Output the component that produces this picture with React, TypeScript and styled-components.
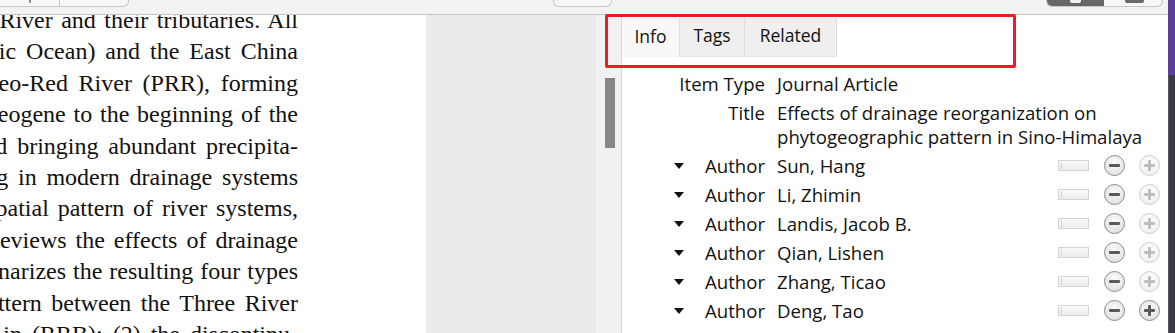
import React from "react";
import styled, { createGlobalStyle } from "styled-components";

const GlobalStyle = createGlobalStyle`
  html, body {
    margin: 0;
    padding: 0;
    width: 1175px;
    height: 333px;
    overflow: hidden;
    background: #fff;
  }
`;

const uiFont = `"Open Sans", "Noto Sans", sans-serif`;

const Shell = styled.div`
  display: flex;
  width: 1175px;
  height: 333px;
`;

const Content = styled.div`
  flex: 1;
  display: flex;
  flex-direction: column;
  min-width: 0;
`;

const Toolbar = styled.div`
  height: 14px;
  flex: none;
  display: flex;
  align-items: flex-start;
  background: #f3f3f3;
  border-bottom: 1px solid #c4c4c4;
`;

const ToolButton = styled.div<{ w: number; gapBefore?: number; flushLeft?: boolean }>`
  width: ${({ w }) => w}px;
  height: 7px;
  margin-left: ${({ gapBefore = 0 }) => gapBefore}px;
  box-sizing: border-box;
  border: 1px solid #c6c6c6;
  border-top: none;
  border-left: ${({ flushLeft }) => (flushLeft ? "none" : "1px solid #c6c6c6")};
  border-radius: ${({ flushLeft }) => (flushLeft ? "0 0 6px 0" : "0 0 6px 6px")};
  background: #f7f7f7;
  display: flex;
  overflow: hidden;
`;

const Segment = styled.div<{ w: number; dark?: boolean; divider?: boolean }>`
  width: ${({ w }) => w}px;
  height: 100%;
  flex: none;
  background: ${({ dark }) => (dark ? "#676767" : "transparent")};
  border-right: ${({ divider }) => (divider ? "1px solid #c6c6c6" : "none")};
  display: flex;
  justify-content: center;
`;

const Nub = styled.div<{ w: number; color: string }>`
  width: ${({ w }) => w}px;
  height: 3px;
  background: ${({ color }) => color};
  border-radius: 0 0 2px 2px;
`;

const Main = styled.div`
  flex: 1;
  display: flex;
  min-height: 0;
`;

const PdfPage = styled.div`
  width: 426px;
  flex: none;
  background: #fff;
  overflow: hidden;
  box-sizing: border-box;
  padding: 0 128px 0 0;
  font-family: "Liberation Serif", "Times New Roman", serif;
  font-size: 24px;
  line-height: 31.4px;
  color: #111;
`;

const PdfLines = styled.div`
  margin-top: -10px;
`;

const PdfLine = styled.div<{ spread?: number }>`
  white-space: nowrap;
  display: flex;
  justify-content: flex-end;
  word-spacing: ${({ spread = 0 }) => spread}px;
`;

const Backdrop = styled.div`
  width: 171px;
  flex: none;
  background: #ebebeb;
  border-right: 1px solid #f6f6f6;
`;

const ScrollTrack = styled.div`
  width: 24px;
  flex: none;
  box-sizing: border-box;
  background: #f1f1f1;
  border-right: 1px solid #d9d9d9;
  padding: 63px 0 0 7px;
`;

const ScrollThumb = styled.div`
  width: 10px;
  height: 70px;
  background: #878787;
`;

const ItemPane = styled.div`
  flex: 1;
  display: flex;
  flex-direction: column;
  font-family: ${uiFont};
  font-size: 18.6px;
  color: #111;
  padding-right: 8px;
`;

const TabBar = styled.div`
  display: flex;
  margin-top: 3px;
  height: 39px;
  font-size: 17.5px;
`;

const Tab = styled.div<{ active?: boolean; w: number }>`
  width: ${({ w }) => w}px;
  box-sizing: border-box;
  display: flex;
  align-items: center;
  justify-content: center;
  padding-bottom: 4px;
  background: ${({ active }) => (active ? "#f8f8f8" : "#efefef")};
  border-right: 1px solid #dcdcdc;
  border-bottom: ${({ active }) => (active ? "none" : "1px solid #e4e4e4")};
`;

const Fields = styled.div`
  display: flex;
  flex-direction: column;
  margin-top: 12px;
`;

const Row = styled.div`
  display: grid;
  grid-template-columns: 143px 1fr auto;
  column-gap: 12px;
  padding: 2.5px 0;
  line-height: 24px;
`;

const Label = styled.div`
  display: flex;
  justify-content: flex-end;
  align-items: center;
  height: 24px;
`;

const Twisty = styled.span`
  width: 0;
  height: 0;
  border-left: 5.5px solid transparent;
  border-right: 5.5px solid transparent;
  border-top: 6px solid #111;
  margin-right: 21px;
`;

const Value = styled.div`
  white-space: pre-line;
`;

const Controls = styled.div`
  display: flex;
  align-items: center;
  height: 24px;
  gap: 14px;
`;

const SwapBox = styled.div`
  position: relative;
  width: 31px;
  height: 11px;
  box-sizing: border-box;
  border: 1px solid #d4d4d4;
  background: linear-gradient(#f9f9f9, #ececec);
  margin-right: 1px;
  &::before {
    content: "";
    position: absolute;
    left: 2px;
    top: 1px;
    width: 1px;
    height: 7px;
    background: #cfcfcf;
  }
`;

const RoundButton = styled.div<{ tone: "on" | "off" }>`
  width: 21px;
  height: 21px;
  flex: none;
  border-radius: 50%;
  box-sizing: border-box;
  border: 1px solid ${({ tone }) => (tone === "on" ? "#8a8a8a" : "#cdcdcd")};
  background: ${({ tone }) =>
    tone === "on"
      ? "radial-gradient(circle at 50% 35%, #fafafa, #dcdcdc)"
      : "radial-gradient(circle at 50% 35%, #fdfdfd, #ededed)"};
  display: flex;
  align-items: center;
  justify-content: center;
`;

const Edge = styled.div`
  width: 7px;
  flex: none;
  display: flex;
  flex-direction: column;
`;

const EdgeTop = styled.div`
  height: 75px;
  background: #5b3f9a;
`;

const EdgeBottom = styled.div`
  flex: 1;
  background: #3a3a42;
  border-left: 1px solid #55555c;
`;

const Highlight = styled.div`
  position: absolute;
  left: 605px;
  top: 14px;
  width: 411px;
  height: 54px;
  box-sizing: border-box;
  border: 3px solid #ec1c24;
  border-radius: 2px;
  pointer-events: none;
`;

const Glyph = ({ kind, tone }: { kind: "minus" | "plus"; tone: "on" | "off" }) => {
  const c = tone === "on" ? "#5a5a5a" : "#bdbdbd";
  return (
    <svg width="13" height="13" viewBox="0 0 13 13">
      <rect x="1" y="5" width="11" height="3" rx="1" fill={c} />
      {kind === "plus" && <rect x="5" y="1" width="3" height="11" rx="1" fill={c} />}
    </svg>
  );
};

const pdfText: { text: string; spread: number }[] = [
  { text: "River and their tributaries. All", spread: 2.5 },
  { text: "ic Ocean) and the East China", spread: 4 },
  { text: "eo-Red River (PRR), forming", spread: 4.7 },
  { text: "eogene to the beginning of the", spread: 1.8 },
  { text: "d bringing abundant precipita-", spread: 3.8 },
  { text: "g in modern drainage systems", spread: 3.8 },
  { text: "patial pattern of river systems,", spread: 2.8 },
  { text: "eviews the effects of drainage", spread: 3 },
  { text: "narizes the resulting four types", spread: 1 },
  { text: "ttern between the Three River", spread: 3.5 },
  { text: "in (RRB); (2) the discontinu-", spread: 4 },
];

const authors = [
  "Sun, Hang",
  "Li, Zhimin",
  "Landis, Jacob B.",
  "Qian, Lishen",
  "Zhang, Ticao",
  "Deng, Tao",
];

export default function App() {
  const last = authors.length - 1;
  return (
    <>
      <GlobalStyle />
      <Shell>
        <Content>
          <Toolbar>
            <ToolButton w={129} flushLeft>
              <Segment w={59} divider>
                <Nub w={2} color="#8a8a8a" />
              </Segment>
            </ToolButton>
            <ToolButton w={59} gapBefore={424} />
            <ToolButton w={117} gapBefore={434}>
              <Segment w={57} dark>
                <Nub w={11} color="#f2f2f2" />
              </Segment>
              <Segment w={60}>
                <Nub w={19} color="#6a6a6a" />
              </Segment>
            </ToolButton>
          </Toolbar>
          <Main>
            <PdfPage>
              <PdfLines>
                {pdfText.map((line) => (
                  <PdfLine key={line.text} spread={line.spread}>
                    {line.text}
                  </PdfLine>
                ))}
              </PdfLines>
            </PdfPage>
            <Backdrop />
            <ScrollTrack>
              <ScrollThumb />
            </ScrollTrack>
            <ItemPane>
              <TabBar>
                <Tab active w={58}>Info</Tab>
                <Tab w={65}>Tags</Tab>
                <Tab w={92}>Related</Tab>
              </TabBar>
              <Fields>
                <Row>
                  <Label>Item Type</Label>
                  <Value>Journal Article</Value>
                </Row>
                <Row>
                  <Label>Title</Label>
                  <Value>
                    {"Effects of drainage reorganization on\nphytogeographic pattern in Sino-Himalaya"}
                  </Value>
                </Row>
                {authors.map((name, i) => (
                  <Row key={name}>
                    <Label>
                      <Twisty />
                      Author
                    </Label>
                    <Value>{name}</Value>
                    <Controls>
                      <SwapBox />
                      <RoundButton tone="on">
                        <Glyph kind="minus" tone="on" />
                      </RoundButton>
                      <RoundButton tone={i === last ? "on" : "off"}>
                        <Glyph kind="plus" tone={i === last ? "on" : "off"} />
                      </RoundButton>
                    </Controls>
                  </Row>
                ))}
              </Fields>
            </ItemPane>
          </Main>
        </Content>
        <Edge>
          <EdgeTop />
          <EdgeBottom />
        </Edge>
      </Shell>
      <Highlight />
    </>
  );
}
